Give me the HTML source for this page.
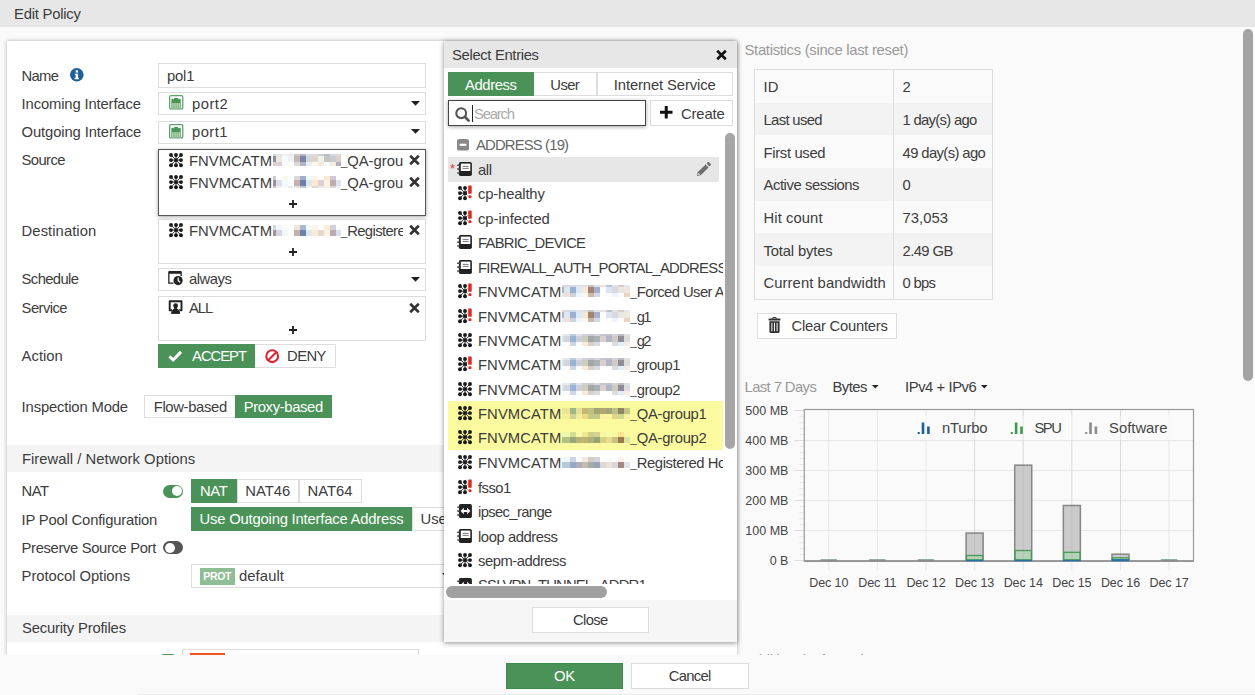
<!DOCTYPE html>
<html lang="en"><head><meta charset="utf-8"><title>Edit Policy</title>
<style>
*{box-sizing:border-box;margin:0;padding:0}
html,body{width:1255px;height:695px;overflow:hidden;background:#fafafa;font-family:"Liberation Sans",sans-serif;font-size:14.8px;color:#3c3c3c}
body{position:relative}
.abs,.ic,.lb,.box,.btn,.t{position:absolute}
.ic{display:block;overflow:visible}
#hdr{position:absolute;left:0;top:0;width:1255px;height:27px;background:#e7e7e7;line-height:29.5px;overflow:hidden;padding-left:14px;font-size:14.8px;color:#3c3c3c}
#panel{position:absolute;left:7px;top:41px;width:730px;height:614px;background:#fff;box-shadow:0 0 4px rgba(0,0,0,.3);overflow:hidden}
#panel .in{position:absolute;left:-7px;top:-41px;width:1255px;height:695px}
.lb{left:21.6px;white-space:nowrap;height:24px;line-height:24px}
.box{background:#fff;border:1px solid #ddd;left:158px;width:268px}
.t{white-space:nowrap;height:24px;line-height:24px}
.seg{position:absolute;height:23px;line-height:21.5px;white-space:nowrap;text-align:center;border:1px solid #ddd;background:#fff;color:#3c3c3c}
.seg.on{background:#4a9258;border-color:#4a9258;color:#fff}
.sec{position:absolute;left:7px;width:740px;background:#f4f4f4;padding-left:15px;white-space:nowrap}
.blur{display:inline-block;position:relative;vertical-align:top;overflow:hidden}
.blur i{position:absolute;display:block}
.ent{position:absolute;left:189px;width:214px;overflow:hidden;white-space:nowrap;height:22px;line-height:22px}
.eb{position:absolute;left:84px;top:4.3px;line-height:0}.e2{position:absolute;left:151.7px;top:0}
.x{position:absolute;left:410px;width:11px;height:11px}
.plus{position:absolute;left:287px;width:10px;height:10px}
#popup{position:absolute;left:444px;top:41px;width:293px;height:600.5px;background:#fff;box-shadow:0 1px 5px rgba(0,0,0,.45)}
#popup .ph{position:absolute;left:0;top:0;width:293px;height:27px;background:#e7e7e7;line-height:28.5px;padding-left:8px;font-size:14.8px}
#list{position:absolute;left:0;top:90px;width:278.8px;height:453.3px;overflow:hidden}
.lr{position:absolute;left:4px;width:272px;height:24.45px;line-height:24.45px;white-space:nowrap}
.lr.sel{background:#e6e6e6;width:270.5px}
.lr.hl{background:#fbfa9f;width:275px;margin-top:-0.6px}
.lr .lt{position:absolute;left:30px;top:0.5px;font-size:14.8px}
.star{position:absolute;left:2px;top:0px;color:#e8352b;font-size:13px;line-height:24px}
#pf{position:absolute;left:0;top:559px;width:293px;height:41.5px;background:#f6f6f6}
#footer{position:absolute;left:0;top:655px;width:1255px;height:40px;background:#fafafa;}
.b2{position:absolute;height:25.5px;line-height:24px;text-align:center;border:1px solid #ddd;background:#fff;font-size:14.8px}
table#st{position:absolute;left:755px;top:70px;border-collapse:collapse;width:237px}
#st td{height:32.7px;border:0;padding:2px 0 0 8.5px;white-space:nowrap;font-size:14.8px}
#st tr:nth-child(even) td{background:#f3f3f3}
#st td:first-child{width:138.5px;border-right:1px solid #ddd}
#st{outline:1px solid #ddd}
#chart{position:absolute}
</style></head>
<body>
<div id="hdr"><span style="letter-spacing:-0.222px">Edit Policy</span></div>

<div id="panel"><div class="in">
<!-- form -->
<div class="lb" style="top:63.5px"><span style="letter-spacing:-0.705px">Name</span></div>
<svg class="ic" style="left:69.9px;top:67.6px" width="13.6" height="13.6" viewBox="0 0 13 13"><circle cx="6.5" cy="6.5" r="6.5" fill="#1c6199"/><rect x="5.4" y="2.2" width="2.3" height="2.2" fill="#fff"/><path d="M4.6 5.4H7.7V9.4H8.6V10.8H4.4V9.4H5.4V6.8H4.6Z" fill="#fff"/></svg>
<div class="box" style="top:63px;height:25px"></div><div class="t" style="left:167px;top:63.5px"><span style="letter-spacing:-0.191px">pol1</span></div>

<div class="lb" style="top:91.5px"><span style="letter-spacing:-0.141px">Incoming Interface</span></div>
<div class="box" style="top:92px;height:23px"></div>
<div class="t" style="left:192px;top:91.5px"><span style="letter-spacing:0.489px">port2</span></div>
<div class="lb" style="top:120px"><span style="letter-spacing:-0.118px">Outgoing Interface</span></div>
<div class="box" style="top:120.5px;height:23px"></div>
<div class="t" style="left:192px;top:120px"><span style="letter-spacing:0.414px">port1</span></div>
<svg class="ic" style="left:168.5px;top:95.3px" width="14.4" height="14.6" viewBox="0 0 14.4 14.6"><rect x="0.65" y="0.65" width="13.1" height="13.3" rx="1.2" fill="#fff" stroke="#5fa26e" stroke-width="1.3"/><path d="M2.4 13V4L3.4 3.4L4.4 4.4L5.4 2.9H8.8L9.8 4.4L10.8 3.4L11.7 4V13Z" fill="#4a9455"/><path d="M3.95 13V8M6.02 13V8M8.08 13V8M10.15 13V8" stroke="#eef3dc" stroke-width="1.03"/></svg><svg class="ic" style="left:168.5px;top:123.8px" width="14.4" height="14.6" viewBox="0 0 14.4 14.6"><rect x="0.65" y="0.65" width="13.1" height="13.3" rx="1.2" fill="#fff" stroke="#5fa26e" stroke-width="1.3"/><path d="M2.4 13V4L3.4 3.4L4.4 4.4L5.4 2.9H8.8L9.8 4.4L10.8 3.4L11.7 4V13Z" fill="#4a9455"/><path d="M3.95 13V8M6.02 13V8M8.08 13V8M10.15 13V8" stroke="#eef3dc" stroke-width="1.03"/></svg>
<div class="lb" style="top:148px"><span style="letter-spacing:-0.603px">Source</span></div>
<div class="box" style="top:148.5px;height:67px;border-color:#555;box-shadow:0 1px 4px rgba(0,0,0,.35)"></div>
<div class="ent" style="top:150px"><span style="letter-spacing:0.038px">FNVMCATM</span><span class="eb"><span class="blur" style="width:68px;height:12px;background:#fff"><i style="left:0;top:0px;width:68px;height:2px;background:linear-gradient(90deg,#d8d8dc 0px 3px,#e4e4e4 3px 9px,#eef2f4 9px 15px,#ececec 15px 21px,#d0c8c8 21px 27px,#b0b4c4 27px 33px,#dcdfe0 33px 39px,#e4dcd8 39px 45px,#c8d0d4 45px 51px,#b8c0c4 51px 57px,#d4d8dc 57px 63px,#e0d8d8 63px 68px)"></i><i style="left:0;top:2px;width:68px;height:6px;background:linear-gradient(90deg,#8c8c9c 0px 3px,#ece8e0 3px 9px,#f4fcfc 9px 15px,#eef2f4 15px 21px,#c4b4b4 21px 27px,#7c84a4 27px 33px,#d0d8d8 33px 39px,#e0d4cc 39px 45px,#ecf4ec 45px 51px,#c4c4c0 51px 57px,#c8ccd0 57px 63px,#dcd0cc 63px 68px)"></i><i style="left:0;top:8px;width:68px;height:4px;background:linear-gradient(90deg,#e0d0c4 0px 3px,#d8d0d8 3px 9px,#f8fcfc 9px 15px,#fafafa 15px 21px,#dcd8d8 21px 27px,#b0b4c8 27px 33px,#e4f0f4 33px 39px,#fcf8f0 39px 45px,#f8e8dc 45px 51px,#f8fcfc 51px 57px,#f8ece0 57px 63px,#b0b0c0 63px 68px)"></i></span></span><span class="e2"><span style="font-size:11.6px">_</span><span style="letter-spacing:0.043px">QA-group1</span></span></div>
<div class="ent" style="top:171.7px"><span style="letter-spacing:0.038px">FNVMCATM</span><span class="eb"><span class="blur" style="width:68px;height:12px;background:#fff"><i style="left:0;top:0px;width:68px;height:4px;background:linear-gradient(90deg,#c8c8d0 0px 3px,#ffffff 3px 9px,#f8f8f0 9px 15px,#ffffff 15px 21px,#e0d8d8 21px 27px,#a0b0cc 27px 33px,#f0f8fc 33px 39px,#fcf4ec 39px 45px,#fcfcfc 45px 51px,#f8e8d0 51px 57px,#d0c8d0 57px 63px,#ffffff 63px 68px)"></i><i style="left:0;top:4px;width:68px;height:6px;background:linear-gradient(90deg,#a89090 0px 3px,#dce0ec 3px 9px,#f0fcfc 9px 15px,#ffffff 15px 21px,#c4b0b0 21px 27px,#6c80a8 27px 33px,#dce8ec 33px 39px,#f8e8d4 39px 45px,#dcd0d0 45px 51px,#fcf4e0 51px 57px,#bcacb0 57px 63px,#dce4f0 63px 68px)"></i><i style="left:0;top:10px;width:68px;height:2px;background:linear-gradient(90deg,#d0c0b8 0px 3px,#f0f0f4 3px 9px,#f8fcfc 9px 15px,#e8ecf0 15px 21px,#ece0d8 21px 27px,#c0c8dc 27px 33px,#f0f4f4 33px 39px,#e8d8cc 39px 45px,#f0e8e4 45px 51px,#f4f0ec 51px 57px,#e0d8d8 57px 63px,#f0f4f8 63px 68px)"></i></span></span><span class="e2"><span style="font-size:11.6px">_</span><span style="letter-spacing:0.043px">QA-group2</span></span></div>
<div class="lb" style="top:219px"><span style="letter-spacing:0.060px">Destination</span></div>
<div class="box" style="top:219px;height:45px"></div>
<div class="ent" style="top:220px"><span style="letter-spacing:0.038px">FNVMCATM</span><span class="eb"><span class="blur" style="width:68px;height:12px;background:#fff"><i style="left:0;top:0px;width:68px;height:1px;background:linear-gradient(90deg,#ffffff 0px 3px,#ffffff 3px 9px,#ffffff 9px 15px,#ffffff 15px 21px,#ffffff 21px 27px,#ffffff 27px 33px,#ffffff 33px 39px,#ffffff 39px 45px,#ffffff 45px 51px,#ffffff 51px 57px,#ffffff 57px 63px,#ffffff 63px 68px)"></i><i style="left:0;top:1px;width:68px;height:5px;background:linear-gradient(90deg,#d4d4dc 0px 3px,#f0f8fc 3px 9px,#f8fcf4 9px 15px,#ffffff 15px 21px,#f0e4dc 21px 27px,#a8b8d4 27px 33px,#f4fcfc 33px 39px,#fcf4e8 39px 45px,#fcfcf8 45px 51px,#fcecd8 51px 57px,#d8d0d8 57px 63px,#ffffff 63px 68px)"></i><i style="left:0;top:6px;width:68px;height:6px;background:linear-gradient(90deg,#a89090 0px 3px,#d0d4e4 3px 9px,#f0f8f4 9px 15px,#ffffff 15px 21px,#c4b0ac 21px 27px,#6c84ac 27px 33px,#dce8ec 33px 39px,#f8ecd8 39px 45px,#e4d8d0 45px 51px,#fcf4e4 51px 57px,#bcacb0 57px 63px,#d8e0ec 63px 68px)"></i></span></span><span class="e2"><span style="font-size:11.6px">_</span><span style="letter-spacing:-0.606px">Registered Hosts</span></span></div>
<div class="lb" style="top:266.7px"><span style="letter-spacing:-0.617px">Schedule</span></div>
<div class="box" style="top:267.5px;height:23px"></div>
<div class="t" style="left:189px;top:266.7px"><span style="letter-spacing:-0.478px">always</span></div>
<div class="lb" style="top:296px"><span style="letter-spacing:-0.564px">Service</span></div>
<div class="box" style="top:296px;height:45px"></div>
<div class="t" style="left:189px;top:295.7px"><span style="letter-spacing:-1.072px">ALL</span></div>
<div class="lb" style="top:344px"><span style="letter-spacing:0.011px">Action</span></div>
<div class="seg on" style="left:158px;top:344px;width:97px;height:24px;line-height:22.5px;padding-left:25px"><span style="letter-spacing:-1.038px">ACCEPT</span></div>
<div class="seg" style="left:255px;top:344px;width:81px;height:24px;line-height:22.5px;padding-left:23px;border-left:0"><span style="letter-spacing:-0.581px">DENY</span></div>
<div class="lb" style="top:394.5px"><span style="letter-spacing:-0.152px">Inspection Mode</span></div>
<div class="seg" style="left:144px;top:395px;width:91.5px;line-height:23.5px;border-right:0"><span style="letter-spacing:-0.335px">Flow-based</span></div>
<div class="seg on" style="left:235px;top:395px;width:96.5px;line-height:23.5px"><span style="letter-spacing:-0.353px">Proxy-based</span></div>

<div class="sec" style="top:445px;height:27px;line-height:28px"><span style="letter-spacing:0.023px">Firewall / Network Options</span></div>
<div class="lb" style="top:479px"><span style="letter-spacing:-0.582px">NAT</span></div>
<div class="seg on" style="left:191px;top:479px;width:45.5px;height:23.5px;line-height:22.5px"><span style="letter-spacing:-0.332px">NAT</span></div>
<div class="seg" style="left:236.5px;top:479px;width:62.5px;height:23.5px;line-height:22.5px"><span style="letter-spacing:-0.023px">NAT46</span></div>
<div class="seg" style="left:298.5px;top:479px;width:63px;height:23.5px;line-height:22.5px"><span style="letter-spacing:-0.023px">NAT64</span></div>
<div class="lb" style="top:507.5px"><span style="letter-spacing:-0.193px">IP Pool Configuration</span></div>
<div class="seg on" style="left:191px;top:507px;width:221px;height:23.5px;line-height:23.5px"><span style="letter-spacing:-0.197px">Use Outgoing Interface Address</span></div>
<div class="seg" style="left:411.5px;top:507px;height:23.5px;line-height:23.5px;width:160px;text-align:left;padding-left:8px">Use Dynamic IP Pool</div>
<div class="lb" style="top:536px"><span style="letter-spacing:-0.357px">Preserve Source Port</span></div>
<div class="lb" style="top:564px"><span style="letter-spacing:-0.058px">Protocol Options</span></div>
<div class="box" style="left:191px;top:564px;height:24px;width:269px"></div>
<div class="abs" style="left:199.5px;top:567.5px;width:35.5px;height:17px;background:#8fbe95;color:#fff;font-size:10.5px;font-weight:bold;line-height:17px;text-align:center;letter-spacing:-0.3px">PROT</div>
<div class="t" style="left:239px;top:564px"><span style="letter-spacing:0.083px">default</span></div>
<div class="sec" style="top:614.5px;height:27px;line-height:27px"><span style="letter-spacing:-0.179px">Security Profiles</span></div>
<div class="box" style="left:181.5px;top:648.5px;height:24px;width:237px"></div>
<div class="abs" style="left:189.5px;top:652.5px;width:35.5px;height:17px;background:#f4511e"></div>
<div class="abs" style="left:157.5px;top:653.5px;width:20px;height:13px;border-radius:7px;background:#4a9258"></div>
<svg class="ic" style="left:411px;top:100.5px" width="9" height="5" viewBox="0 0 9 5"><path d="M0 0H9L4.5 4.8Z" fill="#222"/></svg><svg class="ic" style="left:411px;top:129px" width="9" height="5" viewBox="0 0 9 5"><path d="M0 0H9L4.5 4.8Z" fill="#222"/></svg><svg class="ic" style="left:411px;top:277px" width="9" height="5" viewBox="0 0 9 5"><path d="M0 0H9L4.5 4.8Z" fill="#222"/></svg><svg class="ic" style="left:409.3px;top:154.8px" width="11" height="10" viewBox="0 0 11 10"><path d="M1.2 0.8L9.8 9.2M9.8 0.8L1.2 9.2" stroke="#333" stroke-width="2.6"/></svg><svg class="ic" style="left:409.3px;top:176.6px" width="11" height="10" viewBox="0 0 11 10"><path d="M1.2 0.8L9.8 9.2M9.8 0.8L1.2 9.2" stroke="#333" stroke-width="2.6"/></svg><svg class="ic" style="left:409.3px;top:224.8px" width="11" height="10" viewBox="0 0 11 10"><path d="M1.2 0.8L9.8 9.2M9.8 0.8L1.2 9.2" stroke="#333" stroke-width="2.6"/></svg><svg class="ic" style="left:409.3px;top:303.3px" width="11" height="10" viewBox="0 0 11 10"><path d="M1.2 0.8L9.8 9.2M9.8 0.8L1.2 9.2" stroke="#333" stroke-width="2.6"/></svg><svg class="ic" style="left:288.7px;top:200.3px" width="8" height="8" viewBox="0 0 8 8"><path d="M4 0V8M0 4H8" stroke="#222" stroke-width="1.8"/></svg><svg class="ic" style="left:288.7px;top:248px" width="8" height="8" viewBox="0 0 8 8"><path d="M4 0V8M0 4H8" stroke="#222" stroke-width="1.8"/></svg><svg class="ic" style="left:288.7px;top:325.5px" width="8" height="8" viewBox="0 0 8 8"><path d="M4 0V8M0 4H8" stroke="#222" stroke-width="1.8"/></svg><svg class="ic" style="left:169.2px;top:153px" width="14" height="14" viewBox="0 0 14 14"><g fill="#1a1a1a"><circle cx="2" cy="2" r="1.95"/><circle cx="2" cy="7.1" r="1.95"/><circle cx="2" cy="12.2" r="1.95"/><circle cx="7" cy="2" r="1.95"/><circle cx="7" cy="7.1" r="1.95"/><circle cx="7" cy="12.2" r="1.95"/><circle cx="12" cy="2" r="1.95"/><circle cx="12" cy="7.1" r="1.95"/><circle cx="12" cy="12.2" r="1.95"/></g><path d="M2 2L12 12.2M12 2L2 12.2M2 7.1H12M7 2V12.2" stroke="#1a1a1a" stroke-width="0.9" fill="none"/></svg><svg class="ic" style="left:169.2px;top:174.8px" width="14" height="14" viewBox="0 0 14 14"><g fill="#1a1a1a"><circle cx="2" cy="2" r="1.95"/><circle cx="2" cy="7.1" r="1.95"/><circle cx="2" cy="12.2" r="1.95"/><circle cx="7" cy="2" r="1.95"/><circle cx="7" cy="7.1" r="1.95"/><circle cx="7" cy="12.2" r="1.95"/><circle cx="12" cy="2" r="1.95"/><circle cx="12" cy="7.1" r="1.95"/><circle cx="12" cy="12.2" r="1.95"/></g><path d="M2 2L12 12.2M12 2L2 12.2M2 7.1H12M7 2V12.2" stroke="#1a1a1a" stroke-width="0.9" fill="none"/></svg><svg class="ic" style="left:169.2px;top:223px" width="14" height="14" viewBox="0 0 14 14"><g fill="#1a1a1a"><circle cx="2" cy="2" r="1.95"/><circle cx="2" cy="7.1" r="1.95"/><circle cx="2" cy="12.2" r="1.95"/><circle cx="7" cy="2" r="1.95"/><circle cx="7" cy="7.1" r="1.95"/><circle cx="7" cy="12.2" r="1.95"/><circle cx="12" cy="2" r="1.95"/><circle cx="12" cy="7.1" r="1.95"/><circle cx="12" cy="12.2" r="1.95"/></g><path d="M2 2L12 12.2M12 2L2 12.2M2 7.1H12M7 2V12.2" stroke="#1a1a1a" stroke-width="0.9" fill="none"/></svg><svg class="ic" style="left:168.2px;top:271.3px" width="15" height="14.4" viewBox="0 0 15 14.4"><path d="M0.2 1Q0.2 0 1.2 0H12.8Q13.8 0 13.8 1V5H12.5V2.8H1.5V11.6H5.6V12.8H0.2Z" fill="#222"/><circle cx="10.1" cy="9.6" r="4.6" fill="#222"/><path d="M10.2 6.6V9.8L12.2 11.2" stroke="#fff" stroke-width="1.25" fill="none"/></svg><svg class="ic" style="left:168.2px;top:300.3px" width="15" height="14" viewBox="0 0 15 14"><path d="M4 10.3H1.7V1.2H13.5V10.3H11.2" stroke="#222" stroke-width="1.9" fill="none" stroke-linejoin="round"/><path d="M3.3 13.7Q3.5 9.8 6.3 9.1L6.5 7H8.7L8.9 9.1Q11.7 9.8 11.9 13.7Z" fill="#222" stroke="#fff" stroke-width="0.9" paint-order="stroke"/><circle cx="7.6" cy="5.7" r="2.4" fill="#222"/><path d="M3.3 13.7Q3.5 9.8 6.3 9.1L6.5 7H8.7L8.9 9.1Q11.7 9.8 11.9 13.7Z" fill="#222"/></svg><svg class="ic" style="left:168.4px;top:350px" width="14.4" height="12" viewBox="0 0 14.4 12"><path d="M1.4 6.4L5.2 10L13 1.9" stroke="#fff" stroke-width="3" fill="none"/></svg><svg class="ic" style="left:264.8px;top:348.6px" width="14.4" height="14.4" viewBox="0 0 14.4 14.4"><circle cx="7.2" cy="7.2" r="5.9" fill="none" stroke="#d9282f" stroke-width="2.1"/><path d="M3.2 11.2L11.2 3.2" stroke="#d9282f" stroke-width="2.1"/></svg><div class="abs" style="left:163.3px;top:484.6px;width:20px;height:13px;border-radius:7px;background:#4a9258"><div class="abs" style="left:8.5px;top:1.5px;width:10px;height:10px;border-radius:5px;background:#fff"></div></div><div class="abs" style="left:163.3px;top:541.3px;width:20px;height:13px;border-radius:7px;background:#555"><div class="abs" style="left:1.5px;top:1.5px;width:10px;height:10px;border-radius:5px;background:#fff"></div></div><svg class="ic" style="left:441.6px;top:573.3px" width="9" height="5" viewBox="0 0 9 5"><path d="M0 0H9L4.5 4.8Z" fill="#222"/></svg>
</div></div>

<!-- right side -->
<div class="t" style="left:744.5px;top:38px;color:#999"><span style="letter-spacing:-0.287px">Statistics (since last reset)</span></div>
<table id="st">
<tr><td><span style="letter-spacing:0.200px">ID</span></td><td>2</td></tr>
<tr><td><span style="letter-spacing:-0.642px">Last used</span></td><td><span style="letter-spacing:-0.681px">1 day(s) ago</span></td></tr>
<tr><td><span style="letter-spacing:-0.319px">First used</span></td><td><span style="letter-spacing:-0.594px">49 day(s) ago</span></td></tr>
<tr><td><span style="letter-spacing:-0.427px">Active sessions</span></td><td>0</td></tr>
<tr><td><span style="letter-spacing:0.080px">Hit count</span></td><td><span style="letter-spacing:0.022px">73,053</span></td></tr>
<tr><td><span style="letter-spacing:-0.164px">Total bytes</span></td><td><span style="letter-spacing:-0.569px">2.49 GB</span></td></tr>
<tr><td><span style="letter-spacing:0.080px">Current bandwidth</span></td><td><span style="letter-spacing:-0.715px">0 bps</span></td></tr>
</table>
<div class="b2" style="left:757px;top:313px;width:140px;height:26px;text-align:left;padding-left:33.5px;font-size:14.8px"><span style="letter-spacing:-0.243px">Clear Counters</span></div>
<svg class="ic" style="left:768.3px;top:316.8px" width="13" height="16" viewBox="0 0 13 16"><path d="M4.2 1.6Q4.2 0 5.6 0H7.4Q8.8 0 8.8 1.6H12.4V3.4H0.6V1.6ZM5.4 1.6H7.6V1.1H5.4Z" fill="#333"/><path d="M1.4 4.2H11.6V14.4Q11.6 16 10 16H3Q1.4 16 1.4 14.4Z" fill="#333"/><path d="M3.9 5.8V14.2M6.5 5.8V14.2M9.1 5.8V14.2" stroke="#fff" stroke-width="1"/></svg>
<div class="t" style="left:744.5px;top:374.8px;color:#999"><span style="letter-spacing:-0.584px">Last 7 Days</span></div>
<div class="t" style="left:832.5px;top:374.8px"><span style="letter-spacing:-0.525px">Bytes</span></div>
<div class="t" style="left:905px;top:374.8px"><span style="letter-spacing:-0.427px">IPv4 + IPv6</span></div>
<svg class="ic" style="left:871.5px;top:385.3px" width="6.6" height="3.6" viewBox="0 0 8 4.4"><path d="M0 0H8L4 4.4Z" fill="#222"/></svg>
<svg class="ic" style="left:981px;top:385.3px" width="6.6" height="3.6" viewBox="0 0 8 4.4"><path d="M0 0H8L4 4.4Z" fill="#222"/></svg>
<svg id="chart" style="left:735px;top:395px" width="480" height="205" viewBox="0 0 480 205" font-family="Liberation Sans, sans-serif" font-size="12.5" fill="#444">
<line x1="93.75" y1="14.5" x2="93.75" y2="175.5" stroke="#e7e7e7" stroke-width="1"/>
<line x1="142.37" y1="14.5" x2="142.37" y2="175.5" stroke="#e7e7e7" stroke-width="1"/>
<line x1="190.99" y1="14.5" x2="190.99" y2="175.5" stroke="#e7e7e7" stroke-width="1"/>
<line x1="239.61" y1="14.5" x2="239.61" y2="175.5" stroke="#e7e7e7" stroke-width="1"/>
<line x1="288.23" y1="14.5" x2="288.23" y2="175.5" stroke="#e7e7e7" stroke-width="1"/>
<line x1="336.85" y1="14.5" x2="336.85" y2="175.5" stroke="#e7e7e7" stroke-width="1"/>
<line x1="385.47" y1="14.5" x2="385.47" y2="175.5" stroke="#e7e7e7" stroke-width="1"/>
<line x1="434.09" y1="14.5" x2="434.09" y2="175.5" stroke="#e7e7e7" stroke-width="1"/>
<line x1="69.25" y1="45.5" x2="458.5" y2="45.5" stroke="#e7e7e7" stroke-width="1"/>
<line x1="69.25" y1="75.5" x2="458.5" y2="75.5" stroke="#e7e7e7" stroke-width="1"/>
<line x1="69.25" y1="105.5" x2="458.5" y2="105.5" stroke="#e7e7e7" stroke-width="1"/>
<line x1="69.25" y1="135.5" x2="458.5" y2="135.5" stroke="#e7e7e7" stroke-width="1"/>
<line x1="59.5" y1="15.5" x2="69.25" y2="15.5" stroke="#ddd" stroke-width="1"/>
<line x1="64.5" y1="21.5" x2="69.25" y2="21.5" stroke="#e6e6e6" stroke-width="1"/>
<line x1="64.5" y1="27.5" x2="69.25" y2="27.5" stroke="#e6e6e6" stroke-width="1"/>
<line x1="64.5" y1="33.5" x2="69.25" y2="33.5" stroke="#e6e6e6" stroke-width="1"/>
<line x1="64.5" y1="39.5" x2="69.25" y2="39.5" stroke="#e6e6e6" stroke-width="1"/>
<line x1="59.5" y1="45.5" x2="69.25" y2="45.5" stroke="#ddd" stroke-width="1"/>
<line x1="64.5" y1="51.5" x2="69.25" y2="51.5" stroke="#e6e6e6" stroke-width="1"/>
<line x1="64.5" y1="57.5" x2="69.25" y2="57.5" stroke="#e6e6e6" stroke-width="1"/>
<line x1="64.5" y1="63.5" x2="69.25" y2="63.5" stroke="#e6e6e6" stroke-width="1"/>
<line x1="64.5" y1="69.5" x2="69.25" y2="69.5" stroke="#e6e6e6" stroke-width="1"/>
<line x1="59.5" y1="75.5" x2="69.25" y2="75.5" stroke="#ddd" stroke-width="1"/>
<line x1="64.5" y1="81.5" x2="69.25" y2="81.5" stroke="#e6e6e6" stroke-width="1"/>
<line x1="64.5" y1="87.5" x2="69.25" y2="87.5" stroke="#e6e6e6" stroke-width="1"/>
<line x1="64.5" y1="93.5" x2="69.25" y2="93.5" stroke="#e6e6e6" stroke-width="1"/>
<line x1="64.5" y1="99.5" x2="69.25" y2="99.5" stroke="#e6e6e6" stroke-width="1"/>
<line x1="59.5" y1="105.5" x2="69.25" y2="105.5" stroke="#ddd" stroke-width="1"/>
<line x1="64.5" y1="111.5" x2="69.25" y2="111.5" stroke="#e6e6e6" stroke-width="1"/>
<line x1="64.5" y1="117.5" x2="69.25" y2="117.5" stroke="#e6e6e6" stroke-width="1"/>
<line x1="64.5" y1="123.5" x2="69.25" y2="123.5" stroke="#e6e6e6" stroke-width="1"/>
<line x1="64.5" y1="129.5" x2="69.25" y2="129.5" stroke="#e6e6e6" stroke-width="1"/>
<line x1="59.5" y1="135.5" x2="69.25" y2="135.5" stroke="#ddd" stroke-width="1"/>
<line x1="64.5" y1="141.5" x2="69.25" y2="141.5" stroke="#e6e6e6" stroke-width="1"/>
<line x1="64.5" y1="147.5" x2="69.25" y2="147.5" stroke="#e6e6e6" stroke-width="1"/>
<line x1="64.5" y1="153.5" x2="69.25" y2="153.5" stroke="#e6e6e6" stroke-width="1"/>
<line x1="64.5" y1="159.5" x2="69.25" y2="159.5" stroke="#e6e6e6" stroke-width="1"/>
<line x1="59.5" y1="165.5" x2="69.25" y2="165.5" stroke="#ddd" stroke-width="1"/>
<rect x="177" y="21" width="262" height="24" fill="#fafafa" opacity="0.75"/>
<rect x="231.11" y="138.00" width="17" height="27.50" fill="#cbcbcb" stroke="#868686" stroke-width="1.5"/><rect x="231.51" y="160.50" width="16.2" height="4.30" fill="#b4d3b9" stroke="#4a9a5a" stroke-width="1.3"/>
<rect x="279.73" y="70.20" width="17" height="95.30" fill="#cbcbcb" stroke="#868686" stroke-width="1.5"/><rect x="280.13" y="155.50" width="16.2" height="9.30" fill="#b4d3b9" stroke="#4a9a5a" stroke-width="1.3"/>
<rect x="328.35" y="110.50" width="17" height="55.00" fill="#cbcbcb" stroke="#868686" stroke-width="1.5"/><rect x="328.75" y="157.30" width="16.2" height="7.50" fill="#b4d3b9" stroke="#4a9a5a" stroke-width="1.3"/>
<rect x="376.97" y="159.20" width="17" height="6.30" fill="#cbcbcb" stroke="#868686" stroke-width="1.5"/><rect x="377.37" y="162.80" width="16.2" height="2.00" fill="#b4d3b9" stroke="#4a9a5a" stroke-width="1.3"/>
<line x1="239.61" y1="14.5" x2="239.61" y2="164" stroke="#000" stroke-opacity="0.06" stroke-width="1"/>
<line x1="288.23" y1="14.5" x2="288.23" y2="164" stroke="#000" stroke-opacity="0.06" stroke-width="1"/>
<line x1="336.85" y1="14.5" x2="336.85" y2="164" stroke="#000" stroke-opacity="0.06" stroke-width="1"/>
<line x1="385.47" y1="14.5" x2="385.47" y2="164" stroke="#000" stroke-opacity="0.06" stroke-width="1"/>
<rect x="85.55" y="164.20000000000005" width="16.4" height="2.2" fill="#7f9a8a"/>
<rect x="134.17" y="164.20000000000005" width="16.4" height="2.2" fill="#7f9a8a"/>
<rect x="182.79" y="164.20000000000005" width="16.4" height="2.2" fill="#7f9a8a"/>
<rect x="425.89" y="164.20000000000005" width="16.4" height="2.2" fill="#7f9a8a"/>
<rect x="69.25" y="14.5" width="389.25" height="151.6" fill="none" stroke="#999" stroke-width="1.2"/>
<line x1="69.25" y1="166" x2="458.5" y2="166" stroke="#8a8a8a" stroke-width="1.6"/>
<rect x="230.81" y="164.90" width="17.6" height="1.30" fill="#2372a8"/>
<rect x="279.43" y="164.90" width="17.6" height="1.30" fill="#2372a8"/>
<rect x="328.05" y="164.90" width="17.6" height="1.30" fill="#2372a8"/>
<rect x="376.67" y="164.20" width="17.6" height="2.00" fill="#2372a8"/>
<text x="53.39999999999998" y="19.60" text-anchor="end">500 MB</text>
<text x="53.39999999999998" y="49.60" text-anchor="end">400 MB</text>
<text x="53.39999999999998" y="79.60" text-anchor="end">300 MB</text>
<text x="53.39999999999998" y="109.60" text-anchor="end">200 MB</text>
<text x="53.39999999999998" y="139.60" text-anchor="end">100 MB</text>
<text x="53.39999999999998" y="169.60" text-anchor="end">0 B</text>
<text x="93.75" y="191.79999999999995" text-anchor="middle" letter-spacing="-0.085">Dec 10</text>
<text x="142.37" y="191.79999999999995" text-anchor="middle" letter-spacing="-0.085">Dec 11</text>
<text x="190.99" y="191.79999999999995" text-anchor="middle" letter-spacing="-0.085">Dec 12</text>
<text x="239.61" y="191.79999999999995" text-anchor="middle" letter-spacing="-0.085">Dec 13</text>
<text x="288.23" y="191.79999999999995" text-anchor="middle" letter-spacing="-0.085">Dec 14</text>
<text x="336.85" y="191.79999999999995" text-anchor="middle" letter-spacing="-0.085">Dec 15</text>
<text x="385.47" y="191.79999999999995" text-anchor="middle" letter-spacing="-0.085">Dec 16</text>
<text x="434.09" y="191.79999999999995" text-anchor="middle" letter-spacing="-0.085">Dec 17</text>
<g fill="#1d5f96"><rect x="182.70000000000005" y="37" width="2" height="2"/><rect x="186.70000000000005" y="27.5" width="2.6" height="11.5"/><rect x="192.10000000000002" y="31.5" width="2.6" height="7.5"/></g><text x="207" y="37.89999999999998" font-size="14.8" fill="#444" letter-spacing="-0.185">nTurbo</text>
<g fill="#3f9a52"><rect x="275.79999999999995" y="37" width="2" height="2"/><rect x="279.79999999999995" y="27.5" width="2.6" height="11.5"/><rect x="285.19999999999993" y="31.5" width="2.6" height="7.5"/></g><text x="299.5" y="37.89999999999998" font-size="14.8" fill="#444" letter-spacing="-1.544">SPU</text>
<g fill="#8c8c8c"><rect x="350.20000000000005" y="37" width="2" height="2"/><rect x="354.20000000000005" y="27.5" width="2.6" height="11.5"/><rect x="359.60000000000014" y="31.5" width="2.6" height="7.5"/></g><text x="374" y="37.89999999999998" font-size="14.8" fill="#444" letter-spacing="0.020">Software</text>
</svg>

<div class="t" style="left:744.5px;top:647.6px;color:#999"><span style="letter-spacing:-0.386px">Additional Information</span></div>
<!-- popup -->
<div id="popup">
<div class="ph"><span style="letter-spacing:-0.332px">Select Entries</span></div>
<svg class="ic" style="left:272px;top:9.2px" width="11" height="10" viewBox="0 0 11 10"><path d="M1.2 0.8L9.8 9.2M9.8 0.8L1.2 9.2" stroke="#111" stroke-width="2.6"/></svg>
<div class="seg on" style="left:4px;top:31px;width:85.5px;height:24px;line-height:24px"><span style="letter-spacing:-0.403px">Address</span></div>
<div class="seg" style="left:89.5px;top:31px;width:63.5px;height:24px;line-height:24px;border-left:0"><span style="letter-spacing:-0.609px">User</span></div>
<div class="seg" style="left:152.5px;top:31px;width:136.5px;height:24px;line-height:24px"><span style="letter-spacing:-0.107px">Internet Service</span></div>
<div class="abs" style="left:4px;top:59px;width:197.5px;height:25.5px;border:1px solid #444;background:#fff;box-shadow:0 1px 4px rgba(0,0,0,.35)"></div>
<svg class="ic" style="left:11px;top:65.5px" width="15" height="15" viewBox="0 0 15 15"><circle cx="6.2" cy="6.2" r="4.9" fill="none" stroke="#555" stroke-width="2.1"/><path d="M9.8 9.8L13.6 13.6" stroke="#555" stroke-width="2.7" stroke-linecap="round"/></svg>
<div class="abs" style="left:28px;top:64px;width:1px;height:17px;background:#222"></div>
<div class="t" style="left:30px;top:61px;color:#aaa;font-size:14.8px"><span style="letter-spacing:-1.163px">Search</span></div>
<div class="seg" style="left:205.5px;top:59px;width:83.5px;height:25.5px;line-height:26px;padding-left:23px;font-size:14.8px"><span style="letter-spacing:-0.160px">Create</span></div>
<svg class="ic" style="left:216.2px;top:65.3px" width="12.5" height="12.5" viewBox="0 0 12.5 12.5"><path d="M6.25 0V12.5M0 6.25H12.5" stroke="#111" stroke-width="3"/></svg>
<div id="list">
<svg class="ic" style="left:12.5px;top:7.7px" width="12" height="12" viewBox="0 0 12 12"><rect width="12" height="11.6" rx="2.2" fill="#888"/><rect x="2.6" y="4.7" width="6.8" height="2.2" fill="#fff"/></svg>
<div class="t" style="left:32px;top:1.5px;color:#666;font-size:14.8px"><span style="letter-spacing:-0.816px">ADDRESS (19)</span></div>
<div class="lr sel" style="top:26.30px"><span class="star">*</span><svg class="ic" style="left:248.8px;top:4.6px" width="14" height="14" viewBox="0 0 14 14"><path d="M0 14L0.7 10.3L8.6 2.4L11.6 5.4L3.7 13.3Z" fill="#6e6e6e"/><path d="M9.5 1.5L10.9 0.1Q11.5 -0.3 12.1 0.3L13.7 1.9Q14.3 2.5 13.9 3.1L12.5 4.5Z" fill="#6e6e6e"/><path d="M1.3 10.7L3.3 12.7L2.2 13.2L0.9 11.9Z" fill="#e4e4e4"/></svg><svg class="ic" style="left:9.0px;top:4.7px" width="15" height="14" viewBox="0 0 15 14"><rect x="1.9" y="0" width="13" height="14" rx="1.7" fill="#222"/><rect x="3.8" y="1.6" width="9.5" height="7.4" fill="#fff"/><path d="M5.6 4.4H11.7M5.6 6.4H11.7" stroke="#555" stroke-width="0.8"/><g fill="#4a4a4a"><rect x="0" y="2.4" width="2.8" height="1.6" rx="0.8"/><rect x="0" y="6.3" width="2.8" height="1.6" rx="0.8"/><rect x="0" y="10.2" width="2.8" height="1.6" rx="0.8"/></g></svg><span class="lt"><span style="letter-spacing:-0.400px">all</span></span></div>
<div class="lr" style="top:50.75px"><svg class="ic" style="left:9.6px;top:4.6px" width="14" height="14" viewBox="0 0 14 14"><g fill="#1a1a1a"><circle cx="2" cy="2" r="1.95"/><circle cx="2" cy="7.1" r="1.95"/><circle cx="2" cy="12.2" r="1.95"/><circle cx="7" cy="2" r="1.95"/><circle cx="7" cy="7.1" r="1.95"/><circle cx="7" cy="12.2" r="1.95"/></g><path d="M2 2L7 7.1L2 12.2M2 7.1H9M7 2V12.2M7 7.1L9.4 4.8M7 7.1L9.4 9.4" stroke="#1a1a1a" stroke-width="0.9" fill="none"/><rect x="10.2" y="-0.6" width="3.5" height="8.3" rx="0.5" fill="#dc2a20"/><rect x="10.4" y="9.2" width="3.1" height="2.9" rx="1.2" fill="#dc2a20"/></svg><span class="lt"><span style="letter-spacing:-0.159px">cp-healthy</span></span></div>
<div class="lr" style="top:75.20px"><svg class="ic" style="left:9.6px;top:4.6px" width="14" height="14" viewBox="0 0 14 14"><g fill="#1a1a1a"><circle cx="2" cy="2" r="1.95"/><circle cx="2" cy="7.1" r="1.95"/><circle cx="2" cy="12.2" r="1.95"/><circle cx="7" cy="2" r="1.95"/><circle cx="7" cy="7.1" r="1.95"/><circle cx="7" cy="12.2" r="1.95"/></g><path d="M2 2L7 7.1L2 12.2M2 7.1H9M7 2V12.2M7 7.1L9.4 4.8M7 7.1L9.4 9.4" stroke="#1a1a1a" stroke-width="0.9" fill="none"/><rect x="10.2" y="-0.6" width="3.5" height="8.3" rx="0.5" fill="#dc2a20"/><rect x="10.4" y="9.2" width="3.1" height="2.9" rx="1.2" fill="#dc2a20"/></svg><span class="lt"><span style="letter-spacing:-0.057px">cp-infected</span></span></div>
<div class="lr" style="top:99.65px"><svg class="ic" style="left:9.0px;top:4.7px" width="15" height="14" viewBox="0 0 15 14"><rect x="1.9" y="0" width="13" height="14" rx="1.7" fill="#222"/><rect x="3.8" y="1.6" width="9.5" height="7.4" fill="#fff"/><path d="M5.6 4.4H11.7M5.6 6.4H11.7" stroke="#555" stroke-width="0.8"/><g fill="#4a4a4a"><rect x="0" y="2.4" width="2.8" height="1.6" rx="0.8"/><rect x="0" y="6.3" width="2.8" height="1.6" rx="0.8"/><rect x="0" y="10.2" width="2.8" height="1.6" rx="0.8"/></g></svg><span class="lt"><span style="letter-spacing:-0.731px">FABRIC_DEVICE</span></span></div>
<div class="lr" style="top:124.10px"><svg class="ic" style="left:9.0px;top:4.7px" width="15" height="14" viewBox="0 0 15 14"><rect x="1.9" y="0" width="13" height="14" rx="1.7" fill="#222"/><rect x="3.8" y="1.6" width="9.5" height="7.4" fill="#fff"/><path d="M5.6 4.4H11.7M5.6 6.4H11.7" stroke="#555" stroke-width="0.8"/><g fill="#4a4a4a"><rect x="0" y="2.4" width="2.8" height="1.6" rx="0.8"/><rect x="0" y="6.3" width="2.8" height="1.6" rx="0.8"/><rect x="0" y="10.2" width="2.8" height="1.6" rx="0.8"/></g></svg><span class="lt"><span style="letter-spacing:-0.684px">FIREWALL_AUTH_PORTAL_ADDRESS</span></span></div>
<div class="lr" style="top:148.55px"><svg class="ic" style="left:9.6px;top:4.6px" width="14" height="14" viewBox="0 0 14 14"><g fill="#1a1a1a"><circle cx="2" cy="2" r="1.95"/><circle cx="2" cy="7.1" r="1.95"/><circle cx="2" cy="12.2" r="1.95"/><circle cx="7" cy="2" r="1.95"/><circle cx="7" cy="7.1" r="1.95"/><circle cx="7" cy="12.2" r="1.95"/></g><path d="M2 2L7 7.1L2 12.2M2 7.1H9M7 2V12.2M7 7.1L9.4 4.8M7 7.1L9.4 9.4" stroke="#1a1a1a" stroke-width="0.9" fill="none"/><rect x="10.2" y="-0.6" width="3.5" height="8.3" rx="0.5" fill="#dc2a20"/><rect x="10.4" y="9.2" width="3.1" height="2.9" rx="1.2" fill="#dc2a20"/></svg><span class="lt"><span style="letter-spacing:0.081px">FNVMCATM</span></span><span class="lt" style="left:113.8px;top:5.6px;line-height:0"><span class="blur" style="width:68px;height:12px;background:#fff"><i style="left:0;top:0px;width:68px;height:2px;background:linear-gradient(90deg,#e0d8d8 0px 2px,#d8d8e0 2px 8px,#d0dce8 8px 14px,#e0e4ec 14px 20px,#e0e0e0 20px 26px,#c8c4c4 26px 32px,#dce4ec 32px 38px,#e8e0dc 38px 44px,#c0c0d4 44px 50px,#e0e4e4 50px 56px,#d8ccc8 56px 62px,#e4e8f0 62px 68px)"></i><i style="left:0;top:2px;width:68px;height:6px;background:linear-gradient(90deg,#c0b0b0 0px 2px,#dce8f0 2px 8px,#9cb0d0 8px 14px,#dceaf8 14px 20px,#f4e8d8 20px 26px,#a48470 26px 32px,#a4b0cc 32px 38px,#ffffff 38px 44px,#dce4f0 44px 50px,#d8d8e0 50px 56px,#e8e8e0 56px 62px,#f0e8e0 62px 68px)"></i><i style="left:0;top:8px;width:68px;height:4px;background:linear-gradient(90deg,#f0e8e4 0px 2px,#f0e0d8 2px 8px,#ccd4e4 8px 14px,#eef6fc 14px 20px,#fcf8f0 20px 26px,#d0b8a8 26px 32px,#d4d8ec 32px 38px,#ffffff 38px 44px,#fcfcf8 44px 50px,#eef4fc 50px 56px,#fcfcf8 56px 62px,#e8d4c4 62px 68px)"></i></span></span><span class="lt" style="left:182.3px"><span style="font-size:11.6px">_</span><span style="letter-spacing:-0.564px">Forced User Authentication</span></span></div>
<div class="lr" style="top:173.00px"><svg class="ic" style="left:9.6px;top:4.6px" width="14" height="14" viewBox="0 0 14 14"><g fill="#1a1a1a"><circle cx="2" cy="2" r="1.95"/><circle cx="2" cy="7.1" r="1.95"/><circle cx="2" cy="12.2" r="1.95"/><circle cx="7" cy="2" r="1.95"/><circle cx="7" cy="7.1" r="1.95"/><circle cx="7" cy="12.2" r="1.95"/></g><path d="M2 2L7 7.1L2 12.2M2 7.1H9M7 2V12.2M7 7.1L9.4 4.8M7 7.1L9.4 9.4" stroke="#1a1a1a" stroke-width="0.9" fill="none"/><rect x="10.2" y="-0.6" width="3.5" height="8.3" rx="0.5" fill="#dc2a20"/><rect x="10.4" y="9.2" width="3.1" height="2.9" rx="1.2" fill="#dc2a20"/></svg><span class="lt"><span style="letter-spacing:0.081px">FNVMCATM</span></span><span class="lt" style="left:113.8px;top:5.6px;line-height:0"><span class="blur" style="width:68px;height:12px;background:#fff"><i style="left:0;top:0px;width:68px;height:2px;background:linear-gradient(90deg,#e0d8d8 0px 2px,#d8d8e0 2px 8px,#d0dce8 8px 14px,#e0e4ec 14px 20px,#e0e0e0 20px 26px,#c8c4c4 26px 32px,#dce4ec 32px 38px,#e8e0dc 38px 44px,#c0c0d4 44px 50px,#e0e4e4 50px 56px,#d8ccc8 56px 62px,#e4e8f0 62px 68px)"></i><i style="left:0;top:2px;width:68px;height:6px;background:linear-gradient(90deg,#c0b0b0 0px 2px,#dce8f0 2px 8px,#9cb0d0 8px 14px,#dceaf8 14px 20px,#f4e8d8 20px 26px,#a48470 26px 32px,#a4b0cc 32px 38px,#ffffff 38px 44px,#dce4f0 44px 50px,#d8d8e0 50px 56px,#e8e8e0 56px 62px,#f0e8e0 62px 68px)"></i><i style="left:0;top:8px;width:68px;height:4px;background:linear-gradient(90deg,#f0e8e4 0px 2px,#f0e0d8 2px 8px,#ccd4e4 8px 14px,#eef6fc 14px 20px,#fcf8f0 20px 26px,#d0b8a8 26px 32px,#d4d8ec 32px 38px,#ffffff 38px 44px,#fcfcf8 44px 50px,#eef4fc 50px 56px,#fcfcf8 56px 62px,#e8d4c4 62px 68px)"></i></span></span><span class="lt" style="left:182.3px"><span style="font-size:11.6px">_</span><span style="letter-spacing:-1.828px">g1</span></span></div>
<div class="lr" style="top:197.45px"><svg class="ic" style="left:9.6px;top:4.6px" width="14" height="14" viewBox="0 0 14 14"><g fill="#1a1a1a"><circle cx="2" cy="2" r="1.95"/><circle cx="2" cy="7.1" r="1.95"/><circle cx="2" cy="12.2" r="1.95"/><circle cx="7" cy="2" r="1.95"/><circle cx="7" cy="7.1" r="1.95"/><circle cx="7" cy="12.2" r="1.95"/><circle cx="12" cy="2" r="1.95"/><circle cx="12" cy="7.1" r="1.95"/><circle cx="12" cy="12.2" r="1.95"/></g><path d="M2 2L12 12.2M12 2L2 12.2M2 7.1H12M7 2V12.2" stroke="#1a1a1a" stroke-width="0.9" fill="none"/></svg><span class="lt"><span style="letter-spacing:0.081px">FNVMCATM</span></span><span class="lt" style="left:113.8px;top:5.6px;line-height:0"><span class="blur" style="width:68px;height:12px;background:#fff"><i style="left:0;top:0px;width:68px;height:2px;background:linear-gradient(90deg,#e8e8f0 0px 2px,#e8e8f0 2px 8px,#c0cce0 8px 14px,#e0e4ec 14px 20px,#d0d0d4 20px 26px,#c8ccd0 26px 32px,#d4d8dc 32px 38px,#c8c4cc 38px 44px,#c0c0d0 44px 50px,#d4d4d4 50px 56px,#c0bcc4 56px 62px,#e0e0e4 62px 68px)"></i><i style="left:0;top:2px;width:68px;height:6px;background:linear-gradient(90deg,#e0e0e4 0px 2px,#d4d4dc 2px 8px,#98b4d4 8px 14px,#ccd0d8 14px 20px,#d0ccc0 20px 26px,#a4a8a4 26px 32px,#a8b0b8 32px 38px,#dcd0cc 38px 44px,#b4b4c8 44px 50px,#ccccc0 50px 56px,#908c98 56px 62px,#dcdcdc 62px 68px)"></i><i style="left:0;top:8px;width:68px;height:4px;background:linear-gradient(90deg,#ffffff 0px 2px,#fcfcf8 2px 8px,#d0d8e8 8px 14px,#f8fcfc 14px 20px,#f8ece0 20px 26px,#d8d0cc 26px 32px,#dcdce0 32px 38px,#ffffff 38px 44px,#ffffff 44px 50px,#dcdce0 50px 56px,#e4ecf4 56px 62px,#f8ece4 62px 68px)"></i></span></span><span class="lt" style="left:182.3px"><span style="font-size:11.6px">_</span><span style="letter-spacing:-1.828px">g2</span></span></div>
<div class="lr" style="top:221.90px"><svg class="ic" style="left:9.6px;top:4.6px" width="14" height="14" viewBox="0 0 14 14"><g fill="#1a1a1a"><circle cx="2" cy="2" r="1.95"/><circle cx="2" cy="7.1" r="1.95"/><circle cx="2" cy="12.2" r="1.95"/><circle cx="7" cy="2" r="1.95"/><circle cx="7" cy="7.1" r="1.95"/><circle cx="7" cy="12.2" r="1.95"/></g><path d="M2 2L7 7.1L2 12.2M2 7.1H9M7 2V12.2M7 7.1L9.4 4.8M7 7.1L9.4 9.4" stroke="#1a1a1a" stroke-width="0.9" fill="none"/><rect x="10.2" y="-0.6" width="3.5" height="8.3" rx="0.5" fill="#dc2a20"/><rect x="10.4" y="9.2" width="3.1" height="2.9" rx="1.2" fill="#dc2a20"/></svg><span class="lt"><span style="letter-spacing:0.081px">FNVMCATM</span></span><span class="lt" style="left:113.8px;top:5.6px;line-height:0"><span class="blur" style="width:68px;height:12px;background:#fff"><i style="left:0;top:0px;width:68px;height:2px;background:linear-gradient(90deg,#e8e8f0 0px 2px,#e8e8f0 2px 8px,#c0cce0 8px 14px,#e0e4ec 14px 20px,#d0d0d4 20px 26px,#c8ccd0 26px 32px,#d4d8dc 32px 38px,#c8c4cc 38px 44px,#c0c0d0 44px 50px,#d4d4d4 50px 56px,#c0bcc4 56px 62px,#e0e0e4 62px 68px)"></i><i style="left:0;top:2px;width:68px;height:6px;background:linear-gradient(90deg,#e0e0e4 0px 2px,#d4d4dc 2px 8px,#98b4d4 8px 14px,#ccd0d8 14px 20px,#d0ccc0 20px 26px,#a4a8a4 26px 32px,#a8b0b8 32px 38px,#dcd0cc 38px 44px,#b4b4c8 44px 50px,#ccccc0 50px 56px,#908c98 56px 62px,#dcdcdc 62px 68px)"></i><i style="left:0;top:8px;width:68px;height:4px;background:linear-gradient(90deg,#ffffff 0px 2px,#fcfcf8 2px 8px,#d0d8e8 8px 14px,#f8fcfc 14px 20px,#f8ece0 20px 26px,#d8d0cc 26px 32px,#dcdce0 32px 38px,#ffffff 38px 44px,#ffffff 44px 50px,#dcdce0 50px 56px,#e4ecf4 56px 62px,#f8ece4 62px 68px)"></i></span></span><span class="lt" style="left:182.3px"><span style="font-size:11.6px">_</span><span style="letter-spacing:-0.446px">group1</span></span></div>
<div class="lr" style="top:246.35px"><svg class="ic" style="left:9.6px;top:4.6px" width="14" height="14" viewBox="0 0 14 14"><g fill="#1a1a1a"><circle cx="2" cy="2" r="1.95"/><circle cx="2" cy="7.1" r="1.95"/><circle cx="2" cy="12.2" r="1.95"/><circle cx="7" cy="2" r="1.95"/><circle cx="7" cy="7.1" r="1.95"/><circle cx="7" cy="12.2" r="1.95"/><circle cx="12" cy="2" r="1.95"/><circle cx="12" cy="7.1" r="1.95"/><circle cx="12" cy="12.2" r="1.95"/></g><path d="M2 2L12 12.2M12 2L2 12.2M2 7.1H12M7 2V12.2" stroke="#1a1a1a" stroke-width="0.9" fill="none"/></svg><span class="lt"><span style="letter-spacing:0.081px">FNVMCATM</span></span><span class="lt" style="left:113.8px;top:5.6px;line-height:0"><span class="blur" style="width:68px;height:12px;background:#fff"><i style="left:0;top:0px;width:68px;height:2px;background:linear-gradient(90deg,#e8e8f0 0px 2px,#e8e8f0 2px 8px,#c0cce0 8px 14px,#e0e4ec 14px 20px,#d0d0d4 20px 26px,#c8ccd0 26px 32px,#d4d8dc 32px 38px,#c8c4cc 38px 44px,#c0c0d0 44px 50px,#d4d4d4 50px 56px,#c0bcc4 56px 62px,#e0e0e4 62px 68px)"></i><i style="left:0;top:2px;width:68px;height:6px;background:linear-gradient(90deg,#e0e0e4 0px 2px,#d4d4dc 2px 8px,#98b4d4 8px 14px,#ccd0d8 14px 20px,#d0ccc0 20px 26px,#a4a8a4 26px 32px,#a8b0b8 32px 38px,#dcd0cc 38px 44px,#b4b4c8 44px 50px,#ccccc0 50px 56px,#908c98 56px 62px,#dcdcdc 62px 68px)"></i><i style="left:0;top:8px;width:68px;height:4px;background:linear-gradient(90deg,#ffffff 0px 2px,#fcfcf8 2px 8px,#d0d8e8 8px 14px,#f8fcfc 14px 20px,#f8ece0 20px 26px,#d8d0cc 26px 32px,#dcdce0 32px 38px,#ffffff 38px 44px,#ffffff 44px 50px,#dcdce0 50px 56px,#e4ecf4 56px 62px,#f8ece4 62px 68px)"></i></span></span><span class="lt" style="left:182.3px"><span style="font-size:11.6px">_</span><span style="letter-spacing:-0.446px">group2</span></span></div>
<div class="lr hl" style="top:270.80px"><svg class="ic" style="left:9.6px;top:4.6px" width="14" height="14" viewBox="0 0 14 14"><g fill="#1a1a1a"><circle cx="2" cy="2" r="1.95"/><circle cx="2" cy="7.1" r="1.95"/><circle cx="2" cy="12.2" r="1.95"/><circle cx="7" cy="2" r="1.95"/><circle cx="7" cy="7.1" r="1.95"/><circle cx="7" cy="12.2" r="1.95"/><circle cx="12" cy="2" r="1.95"/><circle cx="12" cy="7.1" r="1.95"/><circle cx="12" cy="12.2" r="1.95"/></g><path d="M2 2L12 12.2M12 2L2 12.2M2 7.1H12M7 2V12.2" stroke="#1a1a1a" stroke-width="0.9" fill="none"/></svg><span class="lt"><span style="letter-spacing:0.081px">FNVMCATM</span></span><span class="lt" style="left:113.8px;top:5.6px;line-height:0"><span class="blur" style="width:68px;height:12px;background:#fbfa9f"><i style="left:0;top:0px;width:68px;height:1px;background:linear-gradient(90deg,#fbfa9f 0px 2px,#fbfa9f 2px 8px,#fbfa9f 8px 14px,#fbfa9f 14px 20px,#fbfa9f 20px 26px,#fbfa9f 26px 32px,#fbfa9f 32px 38px,#fbfa9f 38px 44px,#fbfa9f 44px 50px,#fbfa9f 50px 56px,#fbfa9f 56px 62px,#fbfa9f 62px 68px)"></i><i style="left:0;top:1px;width:68px;height:6px;background:linear-gradient(90deg,#ece494 0px 2px,#ece494 2px 8px,#a0b888 8px 14px,#e4e094 14px 20px,#c4b870 20px 26px,#c0c080 26px 32px,#a4a474 32px 38px,#b0a870 38px 44px,#a0a478 44px 50px,#bcc084 50px 56px,#8c8860 56px 62px,#c4c484 62px 68px)"></i><i style="left:0;top:7px;width:68px;height:5px;background:linear-gradient(90deg,#f4f098 0px 2px,#f4f098 2px 8px,#d0d490 8px 14px,#f0ec98 14px 20px,#e8dc88 20px 26px,#c8c880 26px 32px,#c4c888 32px 38px,#f8f4a0 38px 44px,#f8f4a0 44px 50px,#e0d488 50px 56px,#d0d890 56px 62px,#f8f0a0 62px 68px)"></i></span></span><span class="lt" style="left:182.3px"><span style="font-size:11.6px">_</span><span style="letter-spacing:-0.297px">QA-group1</span></span></div>
<div class="lr hl" style="top:295.25px"><svg class="ic" style="left:9.6px;top:4.6px" width="14" height="14" viewBox="0 0 14 14"><g fill="#1a1a1a"><circle cx="2" cy="2" r="1.95"/><circle cx="2" cy="7.1" r="1.95"/><circle cx="2" cy="12.2" r="1.95"/><circle cx="7" cy="2" r="1.95"/><circle cx="7" cy="7.1" r="1.95"/><circle cx="7" cy="12.2" r="1.95"/><circle cx="12" cy="2" r="1.95"/><circle cx="12" cy="7.1" r="1.95"/><circle cx="12" cy="12.2" r="1.95"/></g><path d="M2 2L12 12.2M12 2L2 12.2M2 7.1H12M7 2V12.2" stroke="#1a1a1a" stroke-width="0.9" fill="none"/></svg><span class="lt"><span style="letter-spacing:0.081px">FNVMCATM</span></span><span class="lt" style="left:113.8px;top:5.6px;line-height:0"><span class="blur" style="width:68px;height:12px;background:#fbfa9f"><i style="left:0;top:0px;width:68px;height:1px;background:linear-gradient(90deg,#fbfa9f 0px 2px,#fbfa9f 2px 8px,#fbfa9f 8px 14px,#fbfa9f 14px 20px,#fbfa9f 20px 26px,#fbfa9f 26px 32px,#fbfa9f 32px 38px,#fbfa9f 38px 44px,#fbfa9f 44px 50px,#fbfa9f 50px 56px,#fbfa9f 56px 62px,#fbfa9f 62px 68px)"></i><i style="left:0;top:1px;width:68px;height:5px;background:linear-gradient(90deg,#f0f8a8 0px 2px,#f0f8a8 2px 8px,#d4dc98 8px 14px,#f8fca8 14px 20px,#f0e890 20px 26px,#d0d088 26px 32px,#d4d490 32px 38px,#f8f8a0 38px 44px,#f8fca8 44px 50px,#f8f8a0 50px 56px,#f8e494 56px 62px,#f8f8a0 62px 68px)"></i><i style="left:0;top:6px;width:68px;height:6px;background:linear-gradient(90deg,#b4c080 0px 2px,#b4c080 2px 8px,#98a878 8px 14px,#b4b478 14px 20px,#c0b470 20px 26px,#acb078 26px 32px,#98a474 32px 38px,#d4d088 38px 44px,#e8dc8c 44px 50px,#c8c480 50px 56px,#947c50 56px 62px,#dce49c 62px 68px)"></i></span></span><span class="lt" style="left:182.3px"><span style="font-size:11.6px">_</span><span style="letter-spacing:-0.297px">QA-group2</span></span></div>
<div class="lr" style="top:319.70px"><svg class="ic" style="left:9.6px;top:4.6px" width="14" height="14" viewBox="0 0 14 14"><g fill="#1a1a1a"><circle cx="2" cy="2" r="1.95"/><circle cx="2" cy="7.1" r="1.95"/><circle cx="2" cy="12.2" r="1.95"/><circle cx="7" cy="2" r="1.95"/><circle cx="7" cy="7.1" r="1.95"/><circle cx="7" cy="12.2" r="1.95"/><circle cx="12" cy="2" r="1.95"/><circle cx="12" cy="7.1" r="1.95"/><circle cx="12" cy="12.2" r="1.95"/></g><path d="M2 2L12 12.2M12 2L2 12.2M2 7.1H12M7 2V12.2" stroke="#1a1a1a" stroke-width="0.9" fill="none"/></svg><span class="lt"><span style="letter-spacing:0.081px">FNVMCATM</span></span><span class="lt" style="left:113.8px;top:5.6px;line-height:0"><span class="blur" style="width:68px;height:12px;background:#fff"><i style="left:0;top:0px;width:68px;height:1px;background:linear-gradient(90deg,#ffffff 0px 2px,#ffffff 2px 8px,#ffffff 8px 14px,#ffffff 14px 20px,#ffffff 20px 26px,#ffffff 26px 32px,#ffffff 32px 38px,#ffffff 38px 44px,#ffffff 44px 50px,#ffffff 50px 56px,#ffffff 56px 62px,#ffffff 62px 68px)"></i><i style="left:0;top:1px;width:68px;height:5px;background:linear-gradient(90deg,#f0f8fc 0px 2px,#f0f8fc 2px 8px,#ccd4e4 8px 14px,#f8fcfc 14px 20px,#f4e8e0 20px 26px,#d0ccc8 26px 32px,#d4d4d8 32px 38px,#ffffff 38px 44px,#f8fcfc 44px 50px,#ffffff 50px 56px,#fcf0e8 56px 62px,#ffffff 62px 68px)"></i><i style="left:0;top:6px;width:68px;height:6px;background:linear-gradient(90deg,#b8c8d8 0px 2px,#b8c8d8 2px 8px,#98a8c4 8px 14px,#b0b0bc 14px 20px,#c4bcb0 20px 26px,#a8aca8 26px 32px,#98a4b4 32px 38px,#dcd8d4 38px 44px,#ece0dc 44px 50px,#d8d8d4 50px 56px,#a48880 56px 62px,#dce4ec 62px 68px)"></i></span></span><span class="lt" style="left:182.3px"><span style="font-size:11.6px">_</span><span style="letter-spacing:-0.421px">Registered Hosts</span></span></div>
<div class="lr" style="top:344.15px"><svg class="ic" style="left:9.6px;top:4.6px" width="14" height="14" viewBox="0 0 14 14"><g fill="#1a1a1a"><circle cx="2" cy="2" r="1.95"/><circle cx="2" cy="7.1" r="1.95"/><circle cx="2" cy="12.2" r="1.95"/><circle cx="7" cy="2" r="1.95"/><circle cx="7" cy="7.1" r="1.95"/><circle cx="7" cy="12.2" r="1.95"/></g><path d="M2 2L7 7.1L2 12.2M2 7.1H9M7 2V12.2M7 7.1L9.4 4.8M7 7.1L9.4 9.4" stroke="#1a1a1a" stroke-width="0.9" fill="none"/><rect x="10.2" y="-0.6" width="3.5" height="8.3" rx="0.5" fill="#dc2a20"/><rect x="10.4" y="9.2" width="3.1" height="2.9" rx="1.2" fill="#dc2a20"/></svg><span class="lt"><span style="letter-spacing:-0.543px">fsso1</span></span></div>
<div class="lr" style="top:368.60px"><svg class="ic" style="left:9.0px;top:4.7px" width="15" height="14" viewBox="0 0 15 14"><rect x="1.9" y="0" width="13" height="14" rx="1.7" fill="#222"/><path d="M3.6 7L6.8 3.8V5.9H10.2V3.8L13.4 7L10.2 10.2V8.1H6.8V10.2Z" fill="#fff"/><g fill="#4a4a4a"><rect x="0" y="2.4" width="2.8" height="1.6" rx="0.8"/><rect x="0" y="6.3" width="2.8" height="1.6" rx="0.8"/><rect x="0" y="10.2" width="2.8" height="1.6" rx="0.8"/></g></svg><span class="lt"><span style="letter-spacing:-0.636px">ipsec_range</span></span></div>
<div class="lr" style="top:393.05px"><svg class="ic" style="left:9.0px;top:4.7px" width="15" height="14" viewBox="0 0 15 14"><rect x="1.9" y="0" width="13" height="14" rx="1.7" fill="#222"/><rect x="3.8" y="1.6" width="9.5" height="7.4" fill="#fff"/><path d="M5.6 4.4H11.7M5.6 6.4H11.7" stroke="#555" stroke-width="0.8"/><g fill="#4a4a4a"><rect x="0" y="2.4" width="2.8" height="1.6" rx="0.8"/><rect x="0" y="6.3" width="2.8" height="1.6" rx="0.8"/><rect x="0" y="10.2" width="2.8" height="1.6" rx="0.8"/></g></svg><span class="lt"><span style="letter-spacing:-0.437px">loop address</span></span></div>
<div class="lr" style="top:417.50px"><svg class="ic" style="left:9.6px;top:4.6px" width="14" height="14" viewBox="0 0 14 14"><g fill="#1a1a1a"><circle cx="2" cy="2" r="1.95"/><circle cx="2" cy="7.1" r="1.95"/><circle cx="2" cy="12.2" r="1.95"/><circle cx="7" cy="2" r="1.95"/><circle cx="7" cy="7.1" r="1.95"/><circle cx="7" cy="12.2" r="1.95"/><circle cx="12" cy="2" r="1.95"/><circle cx="12" cy="7.1" r="1.95"/><circle cx="12" cy="12.2" r="1.95"/></g><path d="M2 2L12 12.2M12 2L2 12.2M2 7.1H12M7 2V12.2" stroke="#1a1a1a" stroke-width="0.9" fill="none"/></svg><span class="lt"><span style="letter-spacing:-0.485px">sepm-address</span></span></div>
<div class="lr" style="top:441.95px"><svg class="ic" style="left:9.0px;top:4.7px" width="15" height="14" viewBox="0 0 15 14"><rect x="1.9" y="0" width="13" height="14" rx="1.7" fill="#222"/><path d="M3.6 7L6.8 3.8V5.9H10.2V3.8L13.4 7L10.2 10.2V8.1H6.8V10.2Z" fill="#fff"/><g fill="#4a4a4a"><rect x="0" y="2.4" width="2.8" height="1.6" rx="0.8"/><rect x="0" y="6.3" width="2.8" height="1.6" rx="0.8"/><rect x="0" y="10.2" width="2.8" height="1.6" rx="0.8"/></g></svg><span class="lt"><span style="letter-spacing:-0.804px">SSLVPN_TUNNEL_ADDR1</span></span></div>
</div>
<div class="abs" style="left:281.4px;top:91.5px;width:9.4px;height:316px;border-radius:5px;background:#a6a6a6"></div>
<div class="abs" style="left:2px;top:545px;width:160.5px;height:11.5px;border-radius:6px;background:#a0a0a0"></div>
<div id="pf"><div class="b2" style="left:87.5px;top:7px;width:117.5px"><span style="letter-spacing:-0.672px">Close</span></div></div>
</div>

<div id="footer"><div class="abs" style="left:138px;top:39px;width:1117px;height:1px;background:#ececec"></div>
<div class="b2" style="left:506px;top:8px;width:117px;background:#4a9258;border-color:#3f8a4d;color:#fff"><span style="letter-spacing:-0.112px">OK</span></div>
<div class="b2" style="left:631px;top:8px;width:117.5px"><span style="letter-spacing:-0.686px">Cancel</span></div>
</div>
<div class="abs" style="left:1243px;top:29px;width:9.7px;height:351.5px;border-radius:5px;background:#a3a3a3"></div>
</body></html>
